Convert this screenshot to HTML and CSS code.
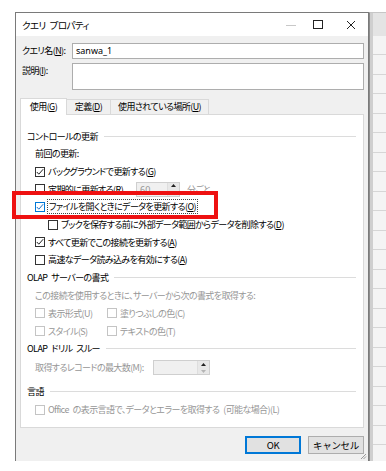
FILE: index.html
```html
<!DOCTYPE html>
<html lang="ja">

<head>
    <meta charset="utf-8">
    <title>クエリ プロパティ</title>
    <link rel="stylesheet" href="styles.css">
</head>

<body>
    <div class="screen">
        <div class="stage">
            <div class="dialog">
                <div class="titlebar">
                    <span class="title">クエリ プロパティ</span>
                    <div class="caption-buttons">
                        <span class="cap cap-min">
                            <svg width="10" height="10" viewBox="0 0 10 10"><path d="M0 5.5h10" stroke="#c8c8c8" stroke-width="1"/></svg>
                        </span>
                        <span class="cap cap-max">
                            <svg width="10" height="10" viewBox="0 0 10 10"><rect x="0.5" y="0.5" width="9" height="8" fill="none" stroke="#222" stroke-width="1"/></svg>
                        </span>
                        <span class="cap cap-close">
                            <svg width="10" height="10" viewBox="0 0 10 10"><path d="M1 1l8 8M9 1l-8 8" stroke="#222" stroke-width="1"/></svg>
                        </span>
                    </div>
                </div>

                <div class="dialog-body">
                    <div class="fields">
                        <label class="field-label">クエリ名(<u>N</u>):</label>
                        <div class="textbox">sanwa_1</div>
                        <label class="field-label">説明(<u>I</u>):</label>
                        <div class="textbox textbox-multi"></div>
                    </div>

                    <div class="tabs">
                        <div class="tab active tab-use">使用(<u>G</u>)</div>
                        <div class="tab tab-def">定義(<u>D</u>)</div>
                        <div class="tab tab-where">使用されている場所(<u>U</u>)</div>
                    </div>

                    <div class="panel">
                        <div class="group-title"><span>コントロールの更新</span></div>
                        <div class="row lvl1">前回の更新:</div>
                        <div class="row lvl1">
                            <span class="check checked"><svg width="8" height="8" viewBox="0 0 8 8"><path d="M0.8 4l2 2.2L7.2 1.2" fill="none" stroke="#222" stroke-width="1"/></svg></span>
                            <span>バックグラウンドで更新する(<u>G</u>)</span>
                        </div>
                        <div class="row lvl1">
                            <span class="check-wrap wide-a">
                                <span class="check"></span>
                                <span>定期的に更新する(<u>R</u>)</span>
                            </span>
                            <span class="spin spin-a">
                                <span class="spin-value">60</span>
                                <span class="spin-buttons">
                                    <svg width="5" height="3" viewBox="0 0 5 3"><path d="M0 3L2.5 0L5 3z" fill="#222"/></svg>
                                    <svg width="5" height="3" viewBox="0 0 5 3"><path d="M0 0L2.5 3L5 0z" fill="#b5b5b5"/></svg>
                                </span>
                            </span>
                            <span class="unit muted">分ごと</span>
                        </div>
                        <div class="row lvl1 row-focus">
                            <span class="check checked focus"><svg width="8" height="8" viewBox="0 0 8 8"><path d="M0.8 4l2 2.2L7.2 1.2" fill="none" stroke="#1b6fc8" stroke-width="1"/></svg></span>
                            <span class="focus-ring">ファイルを開くときにデータを更新する(<u>O</u>)</span>
                        </div>
                        <div class="row lvl2">
                            <span class="check"></span>
                            <span>ブックを保存する前に外部データ範囲からデータを削除する(<u>D</u>)</span>
                        </div>
                        <div class="row lvl1">
                            <span class="check checked"><svg width="8" height="8" viewBox="0 0 8 8"><path d="M0.8 4l2 2.2L7.2 1.2" fill="none" stroke="#222" stroke-width="1"/></svg></span>
                            <span>すべて更新でこの接続を更新する(<u>A</u>)</span>
                        </div>
                        <div class="row lvl1">
                            <span class="check"></span>
                            <span>高速なデータ読み込みを有効にする(<u>A</u>)</span>
                        </div>

                        <div class="group-title"><span>OLAP サーバーの書式</span></div>
                        <div class="row lvl1 muted row-note">この接続を使用するときに、サーバーから次の書式を取得する:</div>
                        <div class="row lvl1 muted">
                            <span class="check-wrap col-a"><span class="check off"></span><span>表示形式(U)</span></span>
                            <span class="check-wrap"><span class="check off"></span><span>塗りつぶしの色(C)</span></span>
                        </div>
                        <div class="row lvl1 muted">
                            <span class="check-wrap col-a"><span class="check off"></span><span>スタイル(S)</span></span>
                            <span class="check-wrap"><span class="check off"></span><span>テキストの色(T)</span></span>
                        </div>

                        <div class="group-title"><span>OLAP ドリル スルー</span></div>
                        <div class="row lvl1 muted row-spin">
                            <span class="wide-b">取得するレコードの最大数(M):</span>
                            <span class="spin spin-b">
                                <span class="spin-value"></span>
                                <span class="spin-buttons">
                                    <svg width="5" height="3" viewBox="0 0 5 3"><path d="M0 3L2.5 0L5 3z" fill="#222"/></svg>
                                    <svg width="5" height="3" viewBox="0 0 5 3"><path d="M0 0L2.5 3L5 0z" fill="#b5b5b5"/></svg>
                                </span>
                            </span>
                        </div>

                        <div class="group-title group-gap2"><span>言語</span></div>
                        <div class="row lvl1 muted">
                            <span class="check off"></span>
                            <span>Office の表示言語で、データとエラーを取得する (可能な場合)(L)</span>
                        </div>
                    </div>

                    <div class="buttons">
                        <button class="btn btn-default">OK</button>
                        <button class="btn">キャンセル</button>
                    </div>
                </div>

                <svg class="grip" width="7" height="7" viewBox="0 0 7 7">
                    <path d="M6 1L1 6M6 3.5L3.5 6" stroke="#9a9a9a" stroke-width="1"/>
                </svg>
            </div>
            <div class="sheet"></div>
        </div>
        <div class="callout"></div>
    </div>
</body>

</html>
```

FILE: styles.css
```css
:root {
    --face: #f0f0f0;
    --frame: #7a7a7a;
    --edge: #d9d9d9;
    --box: #adadad;
    --text: #000;
    --muted: #969696;
    --accent: #0078d7;
}

body {
    margin: 0;
    background: #fff;
    font-family: "Noto Sans CJK JP", "Noto Sans", sans-serif;
    font-size: 9px;
    letter-spacing: -0.6px;
    word-spacing: 2.5px;
    font-feature-settings: "palt";
    color: var(--text);
}

.screen {
    position: relative;
    width: 386px;
    height: 471px;
    padding: 12px 0 10px 15px;
    box-sizing: border-box;
}

.stage {
    display: flex;
    height: 449px;
}

/* dialog frame */

.dialog {
    position: relative;
    width: 354px;
    box-sizing: border-box;
    border: 1px solid var(--frame);
    border-bottom: none;
    background: var(--face);
    display: flex;
    flex-direction: column;
}

.titlebar {
    height: 23px;
    background: #fff;
    display: flex;
    align-items: center;
    padding-left: 6px;
}

.title {
    font-size: 9.5px;
}

.caption-buttons {
    margin-left: auto;
    display: flex;
    height: 100%;
}

.cap {
    width: 32px;
    display: flex;
    align-items: center;
    justify-content: center;
}

.cap-min {
    width: 22px;
}

.cap-close {
    width: 34px;
}

.dialog-body {
    flex: 1;
    padding: 7px 4px 0 4px;
    display: flex;
    flex-direction: column;
}

/* name / description */

.fields {
    display: grid;
    grid-template-columns: 50px 1fr;
    row-gap: 4px;
    padding-left: 2px;
}

.field-label {
    line-height: 16px;
    white-space: nowrap;
}

.textbox {
    height: 16px;
    box-sizing: border-box;
    border: 1px solid var(--box);
    background: #fff;
    padding: 0 3px;
    line-height: 14px;
    font-family: "Noto Sans", sans-serif;
    letter-spacing: 0;
}

.textbox-multi {
    height: 27px;
}

/* tabs */

.tabs {
    display: flex;
    margin-top: 8px;
    height: 16px;
    align-items: flex-end;
    white-space: nowrap;
}

.tab {
    height: 15px;
    box-sizing: border-box;
    border: 1px solid var(--edge);
    border-bottom: none;
    margin-left: -1px;
    line-height: 14px;
    text-align: center;
    background: var(--face);
}

.tab.active {
    height: 17px;
    margin-left: 0;
    margin-bottom: -1px;
    background: #fff;
    line-height: 16px;
    position: relative;
    z-index: 1;
}

.tab-use {
    width: 47px;
}

.tab-def {
    width: 45px;
}

.tab-where {
    width: 99px;
}

.panel {
    height: 314px;
    box-sizing: border-box;
    border: 1px solid var(--edge);
    background: #fff;
    padding: 12px 7px 0 6px;
}

.group-title {
    display: flex;
    align-items: center;
    height: 18px;
    gap: 6px;
    white-space: nowrap;
}

.group-title::after {
    content: "";
    flex: 1;
    height: 1px;
    background: #dcdcdc;
}

.group-gap2 {
    margin-top: 5px;
}

.row {
    display: flex;
    align-items: center;
    height: 17.7px;
    white-space: nowrap;
}

.lvl1 {
    padding-left: 8px;
}

.lvl2 {
    padding-left: 21px;
}

.row-spin {
    height: 20px;
}

.muted {
    color: var(--muted);
}

.check-wrap {
    display: flex;
    align-items: center;
}

.check {
    width: 10px;
    height: 10px;
    box-sizing: border-box;
    border: 1px solid #333;
    background: #fff;
    margin-right: 3px;
    display: flex;
    align-items: center;
    justify-content: center;
    flex: none;
}

.check.focus {
    border-color: var(--accent);
}

.check.off {
    border-color: #c4c4c4;
}

.focus-ring {
    outline: 1px dotted #444;
    outline-offset: 0;
    padding: 0 1px;
    line-height: 13px;
}

.wide-a {
    width: 101px;
}

.wide-b {
    min-width: 118px;
}

.col-a {
    width: 72px;
}

/* spinners */

.spin {
    height: 15px;
    box-sizing: border-box;
    border: 1px solid #cfcfcf;
    background: var(--face);
    display: flex;
}

.spin-a {
    width: 44px;
}

.spin-b {
    width: 57px;
}

.spin-value {
    flex: 1;
    padding-left: 3px;
    line-height: 13px;
    color: var(--muted);
    font-family: "Noto Sans", sans-serif;
    letter-spacing: 0;
}

.spin-buttons {
    width: 11px;
    display: flex;
    flex-direction: column;
    align-items: center;
    justify-content: space-around;
    border-left: 1px solid #dedede;
    background: #e8e8e8;
}

.unit {
    margin-left: 7px;
}

/* buttons */

.buttons {
    display: flex;
    justify-content: flex-end;
    gap: 7px;
    margin-top: 8px;
}

.btn {
    width: 56px;
    height: 18px;
    box-sizing: border-box;
    border: 1px solid var(--box);
    background: #e1e1e1;
    font-family: inherit;
    font-size: 9.5px;
    letter-spacing: -0.3px;
    color: var(--text);
    padding: 0;
}

.btn-default {
    border: 2px solid var(--accent);
}

.grip {
    position: absolute;
    right: 1px;
    bottom: 1px;
}

/* spreadsheet peeking out behind the dialog */

.sheet {
    flex: 1;
    border-top: 1px solid #c6c6c6;
    border-left: 1px solid #8c8c8c;
    box-shadow: inset 3px 0 0 #cfcfcf;
    background:
        linear-gradient(#e4e4e4, #e4e4e4) top / 100% 23px no-repeat,
        repeating-linear-gradient(to bottom, transparent 0, transparent 18.5px, #d6d6d6 18.5px, #d6d6d6 19.5px) 0 23px / 100% 100% no-repeat,
        #f4f4f4;
}

/* red annotation box */

.callout {
    position: absolute;
    left: 12px;
    top: 191px;
    width: 206px;
    height: 28px;
    box-sizing: border-box;
    border: 4px solid #ee1111;
}
```
